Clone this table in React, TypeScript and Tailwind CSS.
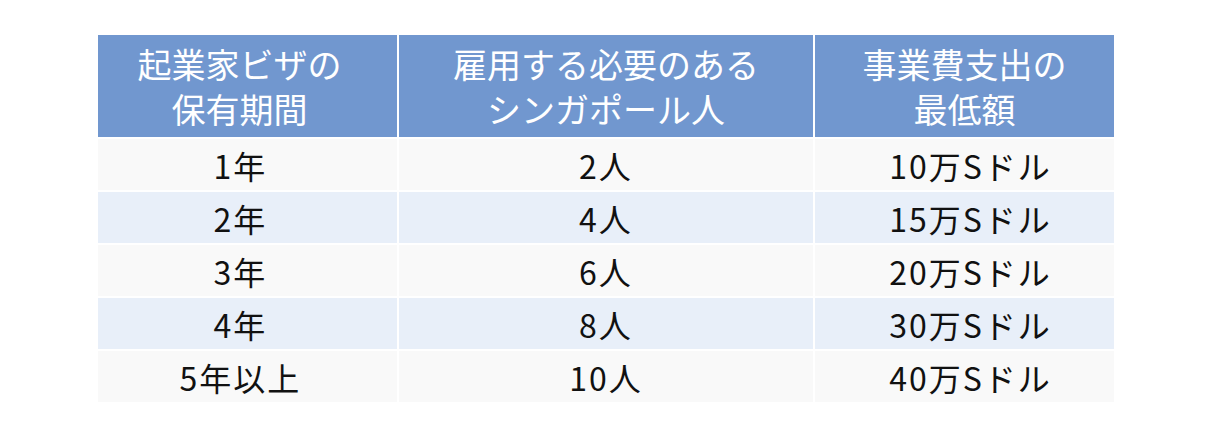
import React from 'react';

const headers = [
  ['起業家ビザの', '保有期間'],
  ['雇用する必要のある', 'シンガポール人'],
  ['事業費支出の', '最低額'],
];

const rows = [
  ['1年', '2人', '10万Sドル'],
  ['2年', '4人', '15万Sドル'],
  ['3年', '6人', '20万Sドル'],
  ['4年', '8人', '30万Sドル'],
  ['5年以上', '10人', '40万Sドル'],
];

export default function App() {
  return (
    <div
      className="w-[1212px] h-[440px] bg-white pt-[35px] pl-[98px]"
      style={{ fontFamily: '"Noto Sans CJK JP", "Noto Sans", sans-serif' }}
    >
      <div className="grid grid-cols-[299px_414px_299px] gap-x-[2px] gap-y-[2px] w-[1016px]">
        {headers.map((h, i) => (
          <div
            key={i}
            className={`h-[102px] bg-[#7197cf] text-white text-[34px] leading-[45px] flex flex-col items-center justify-center ${
              i === 0 ? 'pr-[16px]' : ''
            }`}
          >
            {h.map((line) => (
              <span key={line}>{line}</span>
            ))}
          </div>
        ))}
        {rows.map((r, ri) =>
          r.map((cell, ci) => (
            <div
              key={`${ri}-${ci}`}
              className={`h-[51px] flex items-center justify-center text-[32px] tracking-[2px] text-[#111] ${
                ri % 2 === 0 ? 'bg-[#f9f9f9]' : 'bg-[#e8eff9]'
              } ${ci === 0 ? 'pr-[14px]' : ''} ${ci === 2 ? 'pl-[12px]' : ''}`}
            >
              {cell}
            </div>
          ))
        )}
      </div>
    </div>
  );
}
